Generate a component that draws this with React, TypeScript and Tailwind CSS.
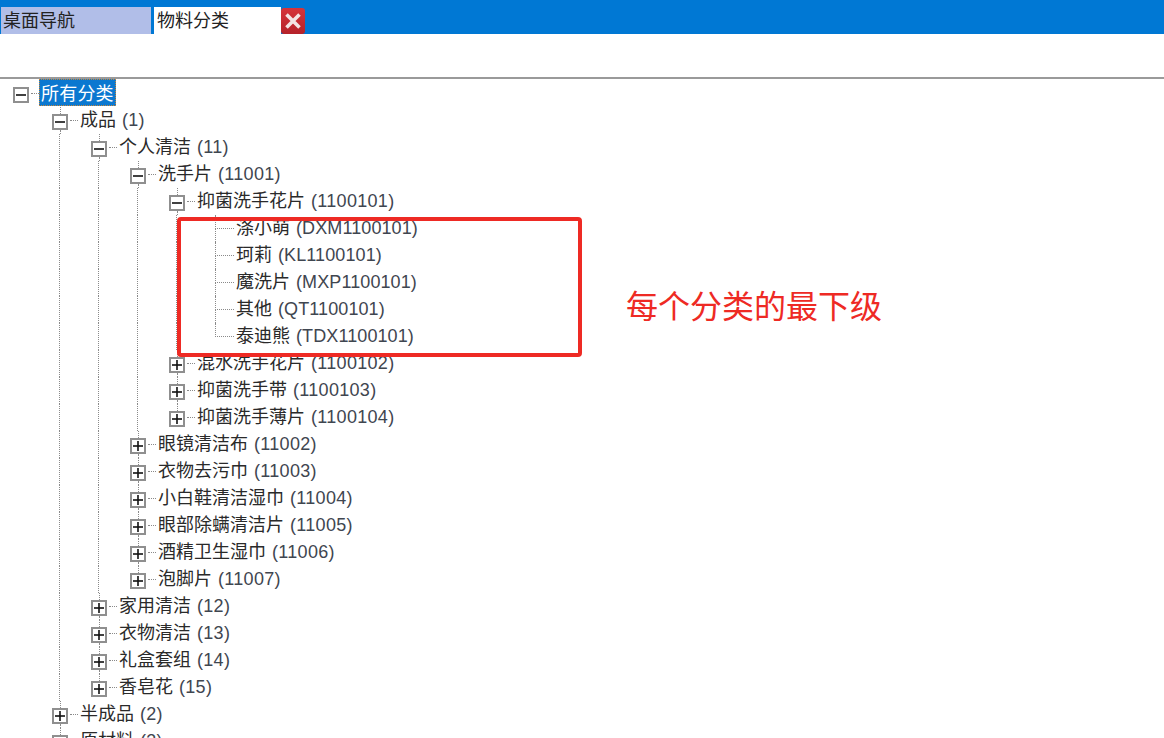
import React from 'react';

type Kind = 'open' | 'closed' | 'leaf';

interface TreeRow {
  name: string;
  code: string;
  kind: Kind;
  // one flag per ancestor column: does a dotted line pass through it
  guides: boolean[];
  up?: boolean;
  down?: boolean;
}

const rows: TreeRow[] = [
  { name: '所有分类', code: '', kind: 'open', guides: [] },
  { name: '成品', code: '(1)', kind: 'open', guides: [false], up: true, down: true },
  { name: '个人清洁', code: '(11)', kind: 'open', guides: [false, true], up: true, down: true },
  { name: '洗手片', code: '(11001)', kind: 'open', guides: [false, true, true], up: true, down: true },
  { name: '抑菌洗手花片', code: '(1100101)', kind: 'open', guides: [false, true, true, true], up: true, down: true },
  { name: '涤小萌', code: '(DXM1100101)', kind: 'leaf', guides: [false, true, true, true, true], up: true, down: true },
  { name: '珂莉', code: '(KL1100101)', kind: 'leaf', guides: [false, true, true, true, true], up: true, down: true },
  { name: '魔洗片', code: '(MXP1100101)', kind: 'leaf', guides: [false, true, true, true, true], up: true, down: true },
  { name: '其他', code: '(QT1100101)', kind: 'leaf', guides: [false, true, true, true, true], up: true, down: true },
  { name: '泰迪熊', code: '(TDX1100101)', kind: 'leaf', guides: [false, true, true, true, true], up: true },
  { name: '混水洗手花片', code: '(1100102)', kind: 'closed', guides: [false, true, true, true], up: true, down: true },
  { name: '抑菌洗手带', code: '(1100103)', kind: 'closed', guides: [false, true, true, true], up: true, down: true },
  { name: '抑菌洗手薄片', code: '(1100104)', kind: 'closed', guides: [false, true, true, true], up: true },
  { name: '眼镜清洁布', code: '(11002)', kind: 'closed', guides: [false, true, true], up: true, down: true },
  { name: '衣物去污巾', code: '(11003)', kind: 'closed', guides: [false, true, true], up: true, down: true },
  { name: '小白鞋清洁湿巾', code: '(11004)', kind: 'closed', guides: [false, true, true], up: true, down: true },
  { name: '眼部除螨清洁片', code: '(11005)', kind: 'closed', guides: [false, true, true], up: true, down: true },
  { name: '酒精卫生湿巾', code: '(11006)', kind: 'closed', guides: [false, true, true], up: true, down: true },
  { name: '泡脚片', code: '(11007)', kind: 'closed', guides: [false, true, true], up: true },
  { name: '家用清洁', code: '(12)', kind: 'closed', guides: [false, true], up: true, down: true },
  { name: '衣物清洁', code: '(13)', kind: 'closed', guides: [false, true], up: true, down: true },
  { name: '礼盒套组', code: '(14)', kind: 'closed', guides: [false, true], up: true, down: true },
  { name: '香皂花', code: '(15)', kind: 'closed', guides: [false, true], up: true },
  { name: '半成品', code: '(2)', kind: 'closed', guides: [false], up: true, down: true },
  { name: '原材料', code: '(3)', kind: 'closed', guides: [false], up: true },
];

const dotted = 'border-dotted border-[#8a8a8a]';

function Toggle({ row }: { row: TreeRow }) {
  return (
    <div className="flex w-[39px] h-full shrink-0 pl-[12px]">
      <div className="flex flex-col items-center w-[16px] h-full">
        <div className={row.up ? `h-[7px] w-0 border-l ${dotted}` : 'h-[7px] w-0'} />
        <div className="flex items-center justify-center w-[16px] h-[16px] shrink-0 border-2 border-[#8f8f8f] bg-white">
          <svg width="12" height="12" viewBox="0 0 12 12">
            <path d="M1 6h10" stroke="#111" strokeWidth="1.6" />
            {row.kind === 'closed' && <path d="M6 1v10" stroke="#111" strokeWidth="1.6" />}
          </svg>
        </div>
        <div className={row.down ? `flex-1 w-0 border-l ${dotted}` : 'flex-1 w-0'} />
      </div>
      <div className={`ml-[2px] w-[8px] border-t self-center ${dotted}`} />
    </div>
  );
}

function Leaf({ row }: { row: TreeRow }) {
  return (
    <div className="flex w-[39px] h-full shrink-0 pl-[19px]">
      <div className="flex flex-col w-0 h-full">
        <div className={row.up ? `flex-1 w-0 border-l ${dotted}` : 'flex-1 w-0'} />
        <div className={row.down ? `flex-1 w-0 border-l ${dotted}` : 'flex-1 w-0'} />
      </div>
      <div className={`flex-1 mr-[1px] border-t self-center ${dotted}`} />
    </div>
  );
}

function Row({ row, index }: { row: TreeRow; index: number }) {
  const isRoot = index === 0;
  const numeric = /^\(\d+\)$/.test(row.code);
  return (
    <div className="flex items-center h-[27px] pl-px">
      {row.guides.map((on, i) => (
        <div key={i} className="flex w-[39px] h-full shrink-0 pl-[19px]">
          <div className={on ? `h-full w-0 border-l ${dotted}` : 'h-full w-0'} />
        </div>
      ))}
      {row.kind === 'leaf' ? <Leaf row={row} /> : <Toggle row={row} />}
      {isRoot ? (
        <span className="ml-[-1px] mb-[2px] px-[1px] h-[27px] leading-[28px] text-white bg-[#0b78d0] border border-dotted border-[#c8873c] text-[18px] tracking-[0.2px] whitespace-nowrap">
          {row.name}
        </span>
      ) : (
        <span className="ml-px text-[18px] leading-[27px] text-[#2a2a2a] whitespace-nowrap">
          {row.name}
          <span className={numeric ? 'ml-[6px] tracking-[0.3px] text-[#3f4650]' : 'ml-[6px] tracking-[0.1px] text-[#3f4650]'}>{row.code}</span>
        </span>
      )}
    </div>
  );
}

export default function App() {
  return (
    <div className="relative w-[1164px] h-[738px] overflow-hidden bg-white font-['Liberation_Sans','Noto_Sans_CJK_SC',sans-serif]">
      <div className="flex items-end h-[34px] pt-[7px] pl-px bg-[#0078d4]">
        <div className="w-[150px] h-[27px] pl-[2px] bg-[#b1bee8] text-[18px] leading-[29px] text-[#222]">桌面导航</div>
        <div className="ml-[3px] w-[127px] h-[27px] pl-[3px] bg-white text-[18px] leading-[29px] text-[#222]">物料分类</div>
        <div className="flex items-center justify-center w-[24px] h-[26px] rounded-[3px] bg-gradient-to-b from-[#d6343a] to-[#b5222a]">
          <svg width="18" height="18" viewBox="0 0 18 18">
            <path d="M2.5 2.5l13 13M15.5 2.5l-13 13" stroke="#f3e4e4" strokeWidth="3.6" />
          </svg>
        </div>
      </div>
      <div className="h-[43px]" />
      <div className="h-[2px] bg-[#9a9a9a]" />
      <div className="pt-px">
        {rows.map((row, i) => (
          <Row key={row.name + row.code} row={row} index={i} />
        ))}
      </div>

      {/* annotation drawn over the screenshot */}
      <div className="absolute left-[177px] top-[217px] w-[405px] h-[140px] border-[4px] border-[#ee2a24] rounded-[4px]" />
      <div className="absolute left-[626px] top-[288px] text-[32px] leading-[38px] text-[#ee2a24] whitespace-nowrap">每个分类的最下级</div>
    </div>
  );
}
